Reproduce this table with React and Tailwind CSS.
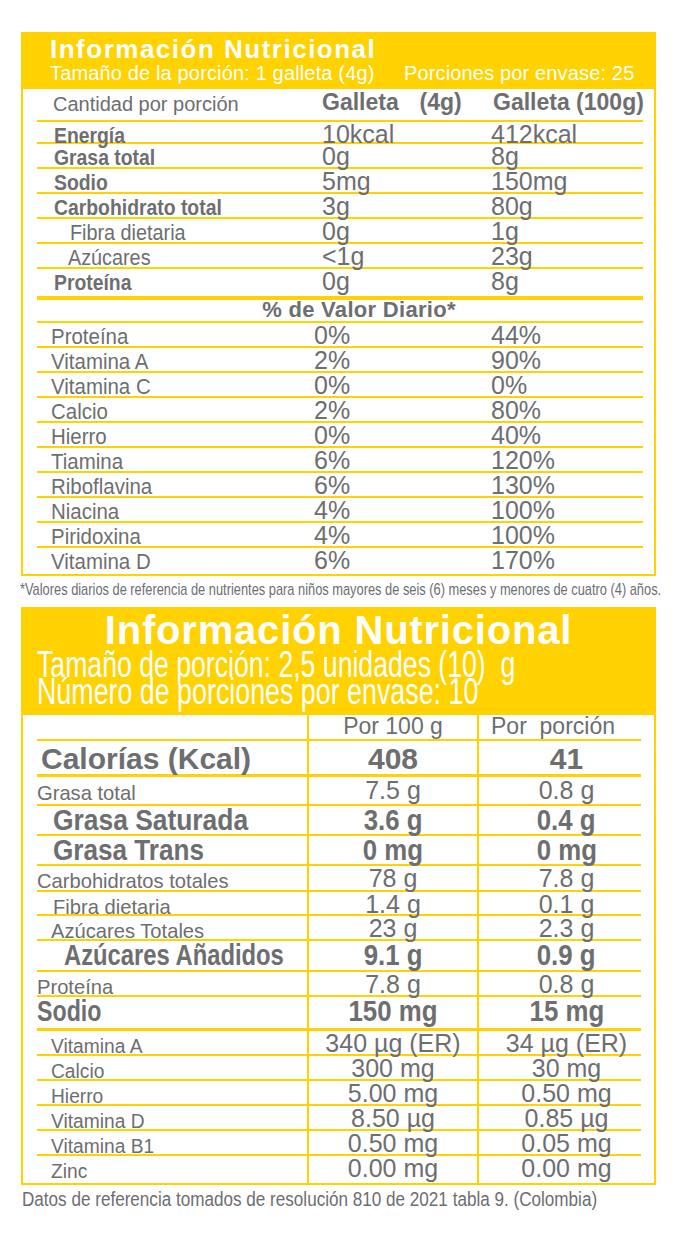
import React from "react";

const SANS = "font-['Liberation_Sans',Arial,sans-serif]";

// condensed text: the label uses a narrow Helvetica, squeeze Arial horizontally
function Sx({ s, center, children }) {
  return (
    <span className={"inline-block whitespace-pre " + (center ? "origin-center " : "origin-left ") + s}>
      {children}
    </span>
  );
}

const nutrients = [
  { label: "Energía", a: "10kcal", b: "412kcal", h: "h-[22px]", bold: true },
  { label: "Grasa total", a: "0g", b: "8g", h: "h-[25px]", bold: true },
  { label: "Sodio", a: "5mg", b: "150mg", h: "h-[25px]", bold: true },
  { label: "Carbohidrato total", a: "3g", b: "80g", h: "h-[25px]", bold: true },
  { label: "Fibra dietaria", a: "0g", b: "1g", h: "h-[25px]", pl: "pl-[33px]" },
  { label: "Azúcares", a: "<1g", b: "23g", h: "h-[25px]", pl: "pl-[31px]" },
];

const daily = [
  ["Proteína", "0%", "44%"],
  ["Vitamina A", "2%", "90%"],
  ["Vitamina C", "0%", "0%"],
  ["Calcio", "2%", "80%"],
  ["Hierro", "0%", "40%"],
  ["Tiamina", "6%", "120%"],
  ["Riboflavina", "6%", "130%"],
  ["Niacina", "4%", "100%"],
  ["Piridoxina", "4%", "100%"],
];

const facts = [
  { label: "Grasa total", a: "7.5 g", b: "0.8 g", h: "h-[27px]", pl: "pl-[14px]", big: false, pb: "pb-[1px]" },
  { label: "Grasa Saturada", a: "3.6 g", b: "0.4 g", h: "h-[28px]", pl: "pl-[30px]", big: true, s: "scale-x-[0.91]", pb: "pb-0" },
  { label: "Grasa Trans", a: "0 mg", b: "0 mg", h: "h-[28px]", pl: "pl-[30px]", big: true, s: "scale-x-[0.9]", pb: "pb-0" },
  { label: "Carbohidratos totales", a: "78 g", b: "7.8 g", h: "h-[24px]", pl: "pl-[14px]", big: false, pb: "pb-0" },
  { label: "Fibra dietaria", a: "1.4 g", b: "0.1 g", h: "h-[22px]", pl: "pl-[30px]", big: false, pb: "pb-0" },
  { label: "Azúcares Totales", a: "23 g", b: "2.3 g", h: "h-[23px]", pl: "pl-[28px]", big: false, pb: "pb-0" },
  { label: "Azúcares Añadidos", a: "9.1 g", b: "0.9 g", h: "h-[29px]", pl: "pl-[41px]", big: true, s: "scale-x-[0.82]", pb: "pb-0" },
  { label: "Proteína", a: "7.8 g", b: "0.8 g", h: "h-[23px]", pl: "pl-[14px]", big: false, pb: "pb-0" },
];

const vitamins = [
  ["Vitamina A", "340 µg (ER)", "34 µg (ER)"],
  ["Calcio", "300 mg", "30 mg"],
  ["Hierro", "5.00 mg", "0.50 mg"],
  ["Vitamina D", "8.50 µg", "0.85 µg"],
  ["Vitamina B1", "0.50 mg", "0.05 mg"],
];

function Line({ thick }) {
  return <div className={thick ? "ml-[14px] mr-[13px] h-[3px] bg-[#ffd200]" : "ml-[14px] mr-[13px] h-[2px] bg-[#ffd200]"} />;
}

function FactRow({ h, pl, pb, label, a, b, big, vit, s }) {
  const cell = "flex items-end justify-center border-l-2 border-[#ffd200] whitespace-pre " + pb;
  if (big) {
    return (
      <div className={"grid grid-cols-[284px_170px_177px] leading-none text-[29px] font-bold " + h}>
        <div className={"flex items-end whitespace-pre " + pl + " " + pb}>
          <Sx s={s}>{label}</Sx>
        </div>
        <div className={cell}>
          <Sx center s="scale-x-[0.89]">{a}</Sx>
        </div>
        <div className={cell}>
          <Sx center s="scale-x-[0.89]">{b}</Sx>
        </div>
      </div>
    );
  }
  return (
    <div className={"grid grid-cols-[284px_170px_177px] leading-none " + h}>
      <div className={"flex items-end whitespace-pre " + pl + " " + pb + (vit ? " text-[20px]" : " text-[21px]")}>
        <Sx s="scale-x-[0.96]">{label}</Sx>
      </div>
      <div className={cell + " text-[25px]"}>{a}</div>
      <div className={cell + " text-[25px]"}>{b}</div>
    </div>
  );
}

function TopLabel() {
  return (
    <section className="ml-[21px] w-[635px] border-2 border-[#ffd200]">
      <header className="h-[55px] bg-[#ffd200] pt-[2px] pl-[27px] text-white">
        <h2 className="text-[26px] font-bold leading-[26px] tracking-[1.5px]">Información Nutricional</h2>
        <div className="flex text-[20px] leading-[22px] tracking-[0.15px] whitespace-nowrap">
          <span className="w-[354px]">Tamaño de la porción: 1 galleta (4g)</span>
          <span>Porciones por envase: 25</span>
        </div>
      </header>

      <div className="ml-[14px] mr-[11px]">
        <div className="grid h-[33px] grid-cols-[285px_169px_1fr] items-end border-b-2 border-[#ffd200] pb-[6px] leading-none">
          <span className="pl-[16px] text-[20px]">Cantidad por porción</span>
          <span className="text-[23px] font-bold whitespace-pre [word-spacing:4px]">Galleta  (4g)</span>
          <span className="ml-[2px] text-[23px] font-bold whitespace-nowrap">Galleta (100g)</span>
        </div>

        {nutrients.map((n) => (
          <div key={n.label} className={"grid grid-cols-[285px_169px_1fr] items-end border-b-2 border-[#ffd200] leading-none " + n.h}>
            {n.bold ? (
              <span className="pl-[17px] text-[22px] font-bold">
                <Sx s="scale-x-[0.88]">{n.label}</Sx>
              </span>
            ) : (
              <span className={n.pl + " text-[22px]"}>
                <Sx s="scale-x-[0.9]">{n.label}</Sx>
              </span>
            )}
            <span className="text-[25px]">{n.a}</span>
            <span className="text-[25px]">{n.b}</span>
          </div>
        ))}

        <div className="grid h-[31px] grid-cols-[285px_169px_1fr] items-end border-b-4 border-[#ffd200] pb-[3px] leading-none">
          <span className="pl-[17px] text-[22px] font-bold">
            <Sx s="scale-x-[0.88]">Proteína</Sx>
          </span>
          <span className="text-[25px]">0g</span>
          <span className="text-[25px]">8g</span>
        </div>

        <div className="flex h-[23px] items-end justify-center border-b-2 border-[#ffd200] pl-[38px] leading-none">
          <span className="text-[22px] font-bold tracking-[0.3px]">% de Valor Diario*</span>
        </div>

        {daily.map(([label, a, b]) => (
          <div key={label} className="grid h-[25px] grid-cols-[277px_177px_1fr] items-end border-b-2 border-[#ffd200] leading-none">
            <span className="pl-[14px] text-[22px]">
              <Sx s="scale-x-[0.93]">{label}</Sx>
            </span>
            <span className="text-[25px]">{a}</span>
            <span className="text-[25px]">{b}</span>
          </div>
        ))}
        <div className="grid h-[26px] grid-cols-[277px_177px_1fr] items-end pb-[1px] leading-none">
          <span className="pl-[14px] text-[22px]">
            <Sx s="scale-x-[0.93]">Vitamina D</Sx>
          </span>
          <span className="text-[25px]">6%</span>
          <span className="text-[25px]">170%</span>
        </div>
      </div>
    </section>
  );
}

function BottomLabel() {
  return (
    <section className="ml-[21px] w-[635px] border-2 border-[#ffd200]">
      <header className="h-[106px] bg-[#ffd200] pb-[10px] text-white">
        <h2 className="text-center text-[40px] font-bold leading-[42px] tracking-[0.8px]">Información Nutricional</h2>
        <div className="pl-[14px] text-[36px] leading-[27px]">
          <p>
            <Sx s="scale-x-[0.74]">Tamaño de porción: 2,5 unidades (10)  g</Sx>
          </p>
          <p>
            <Sx s="scale-x-[0.745]">Número de porciones por envase: 10</Sx>
          </p>
        </div>
      </header>

      <div className="grid h-[24px] grid-cols-[284px_170px_177px] leading-none">
        <div />
        <div className="flex items-end justify-center border-l-2 border-[#ffd200] pb-[4px] text-[23px]">Por 100 g</div>
        <div className="flex items-end border-l-2 border-[#ffd200] pb-[4px] pl-[12px] text-[23px] whitespace-pre">Por  porción</div>
      </div>
      <Line />

      <div className="grid h-[33px] grid-cols-[284px_170px_177px] leading-none">
        <div className="flex items-end pl-[18px] text-[30px] font-bold">Calorías (Kcal)</div>
        <div className="flex items-end justify-center border-l-2 border-[#ffd200] text-[30px] font-bold">408</div>
        <div className="flex items-end justify-center border-l-2 border-[#ffd200] text-[30px] font-bold">41</div>
      </div>
      <Line thick />

      {facts.map((f) => (
        <div key={f.label}>
          <FactRow {...f} />
          <Line />
        </div>
      ))}

      <FactRow label="Sodio" a="150 mg" b="15 mg" h="h-[31px]" pl="pl-[14px]" big s="scale-x-[0.8]" pb="pb-[2px]" />
      <Line thick />

      {vitamins.map(([label, a, b]) => (
        <div key={label}>
          <FactRow label={label} a={a} b={b} h="h-[23px]" pl="pl-[28px]" vit pb="pb-0" />
          <Line />
        </div>
      ))}
      <FactRow label="Zinc" a="0.00 mg" b="0.00 mg" h="h-[27px]" pl="pl-[28px]" vit pb="pb-[2px]" />
    </section>
  );
}

export default function App() {
  return (
    <div className={"min-h-[1245px] w-[681px] overflow-hidden bg-white pt-[32px] text-[#6d6e70] " + SANS}>
      <TopLabel />
      <div className="h-[31px] pt-[5px] pl-[20px] text-[17px] leading-none whitespace-nowrap">
        <Sx s="scale-x-[0.755]">*Valores diarios de referencia de nutrientes para niños mayores de seis (6) meses y menores de cuatro (4) años.</Sx>
      </div>
      <BottomLabel />
      <p className="mt-[4px] pl-[22px] text-[20px] leading-none whitespace-nowrap">
        <Sx s="scale-x-[0.855]">Datos de referencia tomados de resolución 810 de 2021 tabla 9. (Colombia)</Sx>
      </p>
    </div>
  );
}
